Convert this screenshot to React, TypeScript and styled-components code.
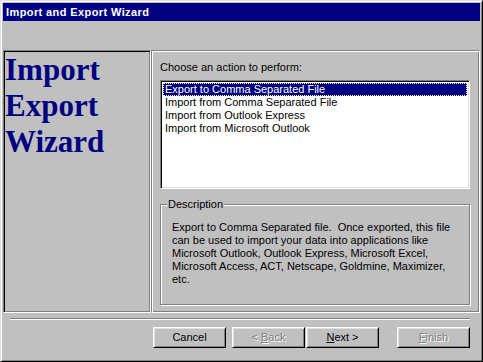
import React from "react";
import styled, { createGlobalStyle } from "styled-components";

const Global = createGlobalStyle`
  html, body { margin: 0; padding: 0; background: #c0c0c0; }
  * { box-sizing: border-box; }
`;

const Window = styled.div`
  width: 483px;
  height: 362px;
  background: #c0c0c0;
  border: 1px solid;
  border-color: #dfdfdf #000 #000 #dfdfdf;
  box-shadow: inset 1px 1px #fff, inset -1px -1px #808080;
  padding: 2px;
  display: flex;
  flex-direction: column;
  font-family: "Liberation Sans", Arial, sans-serif;
  font-size: 11px;
  color: #000;
`;

const TitleBar = styled.div`
  height: 18px;
  background: #000080;
  color: #fff;
  font-weight: bold;
  font-size: 11px;
  letter-spacing: 0.4px;
  line-height: 18px;
  padding-left: 3px;
  white-space: nowrap;
`;

const Panels = styled.div`
  margin-top: 29px;
  height: 263px;
  display: grid;
  grid-template-columns: 148px 329px;
`;

const SidePanel = styled.div`
  border: 1px solid;
  border-color: #808080 #fff #fff #808080;
  box-shadow: inset 1px 1px #000, inset -1px -1px #808080;
  padding: 1px 0 0 1px;
  font-family: "Liberation Serif", "Times New Roman", serif;
  font-weight: bold;
  font-size: 31px;
  line-height: 36px;
  color: #000080;
`;

const MainPanel = styled.div`
  border: 1px solid;
  border-color: #808080 #fff #fff #808080;
  box-shadow: inset 1px 1px #fff, inset -1px -1px #808080;
  padding: 10px 9px 0 8px;
  display: flex;
  flex-direction: column;
`;

const Prompt = styled.div`
  line-height: 13px;
  height: 13px;
`;

const ListBox = styled.div`
  margin-top: 6px;
  height: 109px;
  background: #fff;
  border: 1px solid;
  border-color: #808080 #fff #fff #808080;
  box-shadow: inset 1px 1px #000, inset -1px -1px #dfdfdf;
  padding: 2px 2px;
`;

const ListItem = styled.div<{ $selected?: boolean }>`
  height: 13px;
  line-height: 11px;
  padding-left: 1px;
  white-space: nowrap;
  background: ${(p) => (p.$selected ? "#000080" : "transparent")};
  color: ${(p) => (p.$selected ? "#fff" : "#000")};
  border: 1px dotted ${(p) => (p.$selected ? "#ffffa0" : "transparent")};
`;

const Group = styled.fieldset`
  margin: 9px 0 0 0;
  padding: 10px 0 0 11px;
  height: 107px;
  min-width: 0;
  border: 1px solid #808080;
  box-shadow: inset 1px 1px #fff, 1px 1px #fff;
`;

const Legend = styled.legend`
  margin-left: -5px;
  padding: 0 1px;
  background: #c0c0c0;
  line-height: 13px;
  font-size: 11px;
`;

const Description = styled.div`
  line-height: 13px;
  white-space: pre;
`;

const Separator = styled.div`
  margin: 5px 10px 0 7px;
  height: 2px;
  border-top: 1px solid #808080;
  border-bottom: 1px solid #fff;
`;

const ButtonRow = styled.div`
  margin-top: 7px;
  display: flex;
  justify-content: flex-end;
  padding-right: 10px;
`;

const Button = styled.button<{ $gap?: number }>`
  width: 73px;
  height: 21px;
  margin-left: ${(p) => p.$gap ?? 0}px;
  padding: 0;
  background: #c0c0c0;
  border: 1px solid;
  border-color: #fff #000 #000 #fff;
  box-shadow: inset 1px 1px #dfdfdf, inset -1px -1px #808080;
  font-family: "Liberation Sans", Arial, sans-serif;
  font-size: 11px;
  color: #000;
  line-height: 13px;
  &:disabled {
    color: #808080;
    text-shadow: 1px 1px #fff;
  }
`;

const options = [
  "Export to Comma Separated File",
  "Import from Comma Separated File",
  "Import from Outlook Express",
  "Import from Microsoft Outlook",
];

const descriptionText = [
  "Export to Comma Separated file.  Once exported, this file",
  "can be used to import your data into applications like",
  "Microsoft Outlook, Outlook Express, Microsoft Excel,",
  "Microsoft Access, ACT, Netscape, Goldmine, Maximizer,",
  "etc.",
].join("\n");

export default function App() {
  return (
    <>
      <Global />
      <Window>
        <TitleBar>Import and Export Wizard</TitleBar>
        <Panels>
          <SidePanel>
            Import
            <br />
            Export
            <br />
            Wizard
          </SidePanel>
          <MainPanel>
            <Prompt>Choose an action to perform:</Prompt>
            <ListBox>
              {options.map((o, i) => (
                <ListItem key={o} $selected={i === 0}>
                  {o}
                </ListItem>
              ))}
            </ListBox>
            <Group>
              <Legend>Description</Legend>
              <Description>{descriptionText}</Description>
            </Group>
          </MainPanel>
        </Panels>
        <Separator />
        <ButtonRow>
          <Button>Cancel</Button>
          <Button $gap={6} disabled>
            &lt; <u>B</u>ack
          </Button>
          <Button $gap={1}>
            <u>N</u>ext &gt;
          </Button>
          <Button $gap={18} disabled>
            <u>F</u>inish
          </Button>
        </ButtonRow>
      </Window>
    </>
  );
}
